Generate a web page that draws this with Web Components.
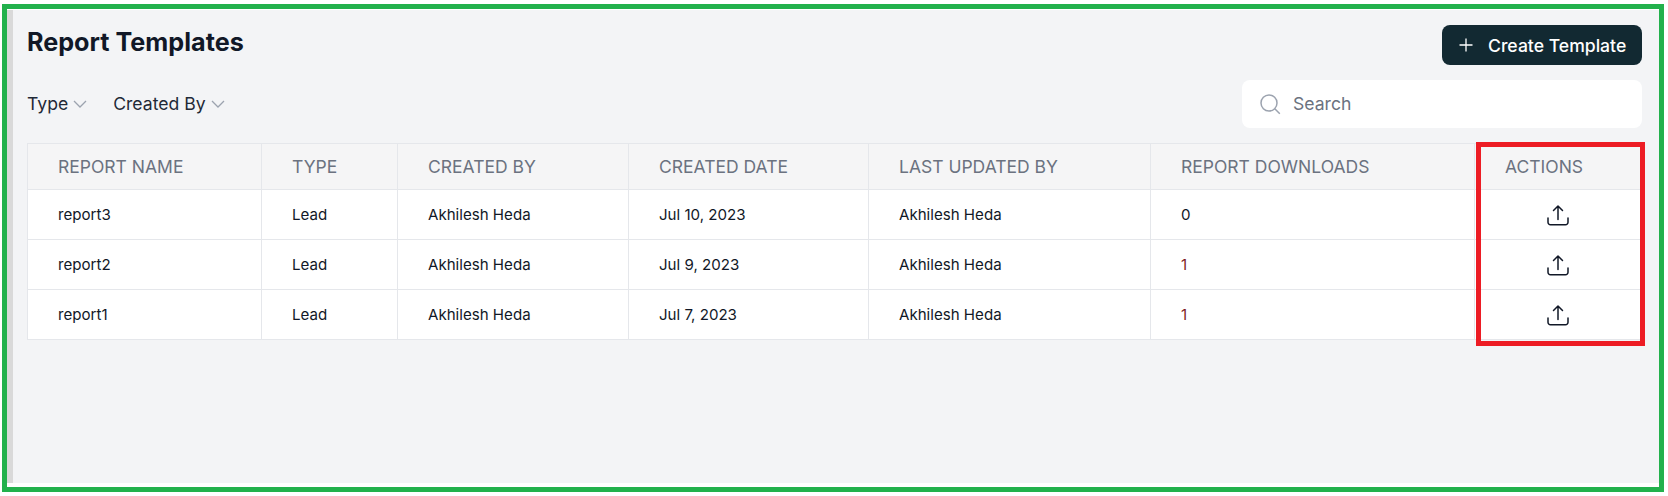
<!DOCTYPE html>
<html>
<head>
<meta charset="utf-8">
<style>
  html, body { margin: 0; padding: 0; background: #fff; }
  body { font-family: Inter, "Liberation Sans", sans-serif; }
</style>
</head>
<body>
<report-page>
  <page-header slot="header" title="Report Templates"></page-header>
  <filter-bar slot="filters"></filter-bar>
  <report-table slot="table"></report-table>
</report-page>

<script>
const ICONS = {
  plus: '<svg width="18" height="18" viewBox="0 0 18 18" fill="none" stroke="currentColor" stroke-width="1.3"><path d="M9 2.500v13M2.500 9h13"/></svg>',
  chevron: '<svg width="16" height="16" viewBox="0 0 16 16" fill="none" stroke="currentColor" stroke-width="1.300"><path d="M2 5 8 11l6-6"/></svg>',
  search: '<svg width="22" height="22" viewBox="0 0 22 22" fill="none" stroke="currentColor" stroke-width="1.500"><circle cx="10" cy="10" r="8"/><path d="m15.800 15.800 5 5"/></svg>',
  upload: '<svg width="24" height="24" viewBox="0 0 24 24" fill="none" stroke="currentColor" stroke-width="1.500" stroke-linecap="round" stroke-linejoin="round"><path d="M12 16.500V3M7.500 7.500 12 3l4.500 4.500M2 15v4.300a2.500 2.500 0 0 0 2.500 2.500h15a2.500 2.500 0 0 0 2.500-2.500V15"/></svg>'
};

class ReportPage extends HTMLElement {
  connectedCallback() {
    if (this.shadowRoot) return;
    this.attachShadow({ mode: 'open' }).innerHTML = `
      <style>
        :host { display: block; width: 1668px; height: 496px; padding: 4px 4px 4px 2px; box-sizing: border-box; }
        .frame { height: 100%; box-sizing: border-box; border: 5px solid #22b14c; background: #fff; padding: 1px 0 4px; display: flex; }
        .strip { width: 6px; background: #d9d9d9; flex-shrink: 0; }
        main { flex: 1; background: #f3f4f6; padding: 15px 17px 0 14px; display: flex; flex-direction: column; }
      </style>
      <div class="frame">
        <div class="strip"></div>
        <main>
          <slot name="header"></slot>
          <slot name="filters"></slot>
          <slot name="table"></slot>
        </main>
      </div>`;
  }
}

class PageHeader extends HTMLElement {
  connectedCallback() {
    if (this.shadowRoot) return;
    this.attachShadow({ mode: 'open' }).innerHTML = `
      <style>
        :host { display: flex; justify-content: space-between; align-items: flex-start; height: 40px; }
        h1 { margin: 0; padding-top: 1px; font-size: 25.200px; line-height: 32px; font-weight: 700; color: #111827; }
        button {
          width: 200px; height: 40px; border: none; border-radius: 8px; background: #122932; color: #fff;
          font: 500 17.600px Inter, sans-serif; display: flex; align-items: center; gap: 13px; padding: 0 0 0 15px;
        }
        svg { display: block; }
      </style>
      <h1>${this.getAttribute('title')}</h1>
      <button>${ICONS.plus}<span>Create Template</span></button>`;
  }
}

class FilterBar extends HTMLElement {
  connectedCallback() {
    if (this.shadowRoot) return;
    this.attachShadow({ mode: 'open' }).innerHTML = `
      <style>
        :host { display: flex; justify-content: space-between; align-items: center; height: 48px; margin-top: 15px; }
        .filters { display: flex; gap: 25px; }
        .filter { display: flex; align-items: center; gap: 4px; font-size: 17.600px; line-height: 24px; color: #1f2937; }
        .filter svg { color: #9ca3af; display: block; }
        .search {
          width: 400px; height: 48px; box-sizing: border-box; background: #fff; border-radius: 8px;
          display: flex; align-items: center; gap: 12px; padding: 0 0 1px 17px;
          font-size: 17.600px; color: #6b7280;
        }
        .search svg { color: #9ca3af; display: block; }
      </style>
      <div class="filters">
        <div class="filter">Type ${ICONS.chevron}</div>
        <div class="filter">Created By ${ICONS.chevron}</div>
      </div>
      <div class="search">${ICONS.search}<span>Search</span></div>`;
  }
}

class ReportTable extends HTMLElement {
  connectedCallback() {
    if (this.shadowRoot) return;
    const heads = ['REPORT NAME', 'TYPE', 'CREATED BY', 'CREATED DATE', 'LAST UPDATED BY', 'REPORT DOWNLOADS', 'ACTIONS'];
    const rows = [
      ['report3', 'Lead', 'Akhilesh Heda', 'Jul 10, 2023', 'Akhilesh Heda', '0'],
      ['report2', 'Lead', 'Akhilesh Heda', 'Jul 9, 2023', 'Akhilesh Heda', '1'],
      ['report1', 'Lead', 'Akhilesh Heda', 'Jul 7, 2023', 'Akhilesh Heda', '1']
    ];
    const body = rows.map(r =>
      r.map((c, i) => `<div class="td${i === 5 && c !== '0' ? ' num' : ''}">${c}</div>`).join('') +
      `<div class="td action">${ICONS.upload}</div>`
    ).join('');
    this.attachShadow({ mode: 'open' }).innerHTML = `
      <style>
        :host { display: block; position: relative; margin-top: 15px; }
        .grid {
          display: grid;
          grid-template-columns: 234px 136px 231px 240px 282px 324px 168px;
          grid-template-rows: 46px repeat(3, 50px);
          border: 1px solid #e5e7eb; border-width: 1px 0 0 1px;
          box-sizing: border-box;
          width: 1615px;
        }
        .th, .td {
          border: 1px solid #e5e7eb; border-width: 0 1px 1px 0;
          display: flex; align-items: center; box-sizing: border-box; padding-left: 30px;
        }
        .th { background: #f5f5f6; color: #6b7280; font-size: 17.500px; font-weight: 400; }
        .td { background: #fff; color: #111827; font-size: 15.100px; padding-bottom: 1px; }
        .td.num { color: #7f1d1d; }
        .td.action { justify-content: center; padding: 0 1px 0 0; color: #111827; }
        .td.action svg { display: block; }
        .mark { position: absolute; left: 1449px; top: -1px; width: 169px; height: 204px; box-sizing: border-box; border: 5px solid #ed1c24; pointer-events: none; }
      </style>
      <div class="grid">
        ${heads.map(h => `<div class="th">${h}</div>`).join('')}
        ${body}
      </div>
      <div class="mark"></div>`;
  }
}

customElements.define('report-page', ReportPage);
customElements.define('page-header', PageHeader);
customElements.define('filter-bar', FilterBar);
customElements.define('report-table', ReportTable);
</script>
</body>
</html>
